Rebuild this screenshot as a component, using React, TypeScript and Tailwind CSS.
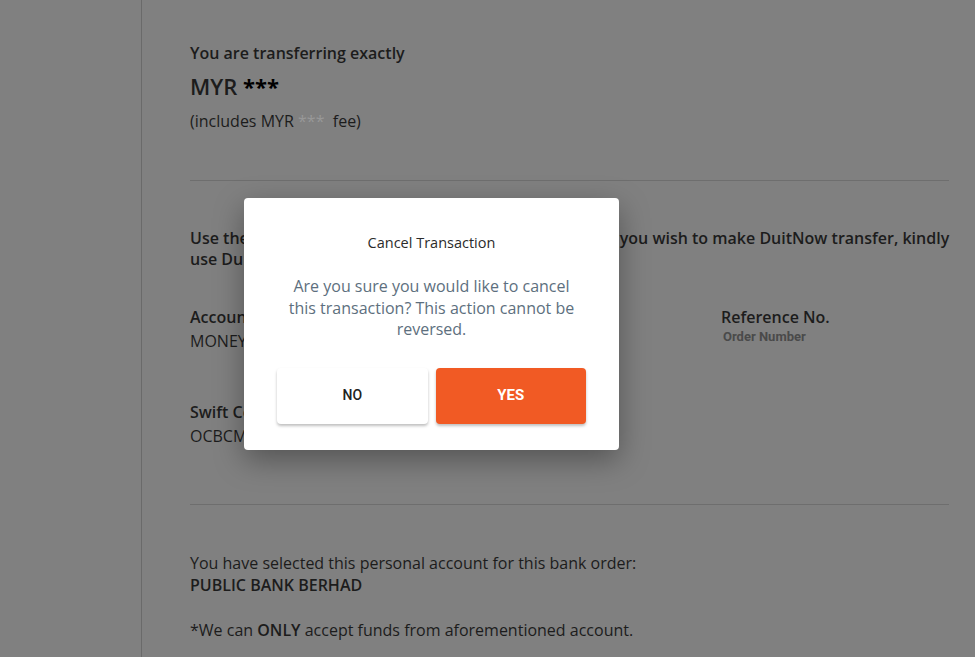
const font = "font-['Open_Sans',sans-serif]";

function Divider() {
  return <div className="h-px w-full bg-[#6e6e6e]" />;
}

function Field({ label, value }: { label: string; value: string }) {
  return (
    <div>
      <p className="text-[16px] font-semibold leading-[24px]">{label}</p>
      <p className="text-[16px] leading-[24px]">{value}</p>
    </div>
  );
}

export default function App() {
  return (
    <div className={`relative h-[657px] w-full overflow-hidden bg-[#808080] ${font} text-[#1c1c1c]`}>
      <div className="flex h-full">
        <div className="w-[142px] shrink-0 border-r border-[#6a6a6a]" />
        <div className="flex-1 pl-[48px] pr-[26px] pt-[41px]">
          <p className="text-[16px] font-semibold leading-[24px]">You are transferring exactly</p>
          <p className="mt-[6px] text-[22px] font-semibold leading-[30px]">
            MYR <span className="font-bold text-black">***</span>
          </p>
          <p className="mt-[8px] text-[16px] leading-[24px]">
            (includes MYR <span className="text-[#989898]">***</span>&nbsp; fee)
          </p>
          <div className="mt-[47px]">
            <Divider />
          </div>
          <p className="mt-[47px] text-[16px] font-semibold leading-[21px]">
            <span className="whitespace-nowrap">
              Use the bank details below for manual bank transfer. If you wish to make DuitNow transfer, kindly
            </span>
            <br />
            use DuitNow QR code instead.
          </p>
          <div className="mt-[35px] grid grid-cols-[265px_266px_1fr] gap-y-[47px]">
            <Field label="Account Name" value="MONEYMATCH SDN BHD" />
            <Field label="Account No." value="701234567" />
            <div>
              <p className="text-[16px] font-semibold leading-[24px]">Reference No.</p>
              <p className="ml-[2px] mt-[1px] font-['Roboto',sans-serif] text-[13px] font-bold leading-[14px] text-[#4a4a4a]">
                Order Number
              </p>
            </div>
            <Field label="Swift Code" value="OCBCMYKL" />
            <div />
            <div />
          </div>
          <div className="mt-[56px]">
            <Divider />
          </div>
          <p className="mt-[47px] text-[16px] leading-[22px]">
            You have selected this personal account for this bank order:
          </p>
          <p className="text-[16px] font-semibold leading-[22px]">PUBLIC BANK BERHAD</p>
          <p className="mt-[23px] text-[16px] leading-[22px]">
            *We can <span className="font-semibold">ONLY</span> accept funds from aforementioned account.
          </p>
        </div>
      </div>

      <div className="absolute left-[244px] top-[198px] flex w-[375px] flex-col items-center rounded-[4px] bg-white px-[33px] pt-[35px] pb-[26px] shadow-[0_10px_30px_rgba(0,0,0,0.35)]">
        <p className="text-[14.5px] leading-[20px] text-[#2b2b2b]">Cancel Transaction</p>
        <p className="mt-[23px] max-w-[296px] text-center text-[16px] leading-[21.5px] text-[#5d6f7e]">
          Are you sure you would like to cancel this transaction? This action cannot be reversed.
        </p>
        <div className="mt-[27px] flex w-full gap-[8px]">
          <button className="h-[56px] flex-1 rounded-[4px] bg-white font-['Roboto',sans-serif] text-[14px] font-medium text-[#222] shadow-[0_2px_3px_rgba(0,0,0,0.25)]">
            NO
          </button>
          <button className="h-[56px] flex-1 rounded-[4px] bg-[#f15a24] font-['Roboto',sans-serif] text-[15px] font-bold text-white shadow-[0_2px_3px_rgba(0,0,0,0.25)]">
            YES
          </button>
        </div>
      </div>
    </div>
  );
}
